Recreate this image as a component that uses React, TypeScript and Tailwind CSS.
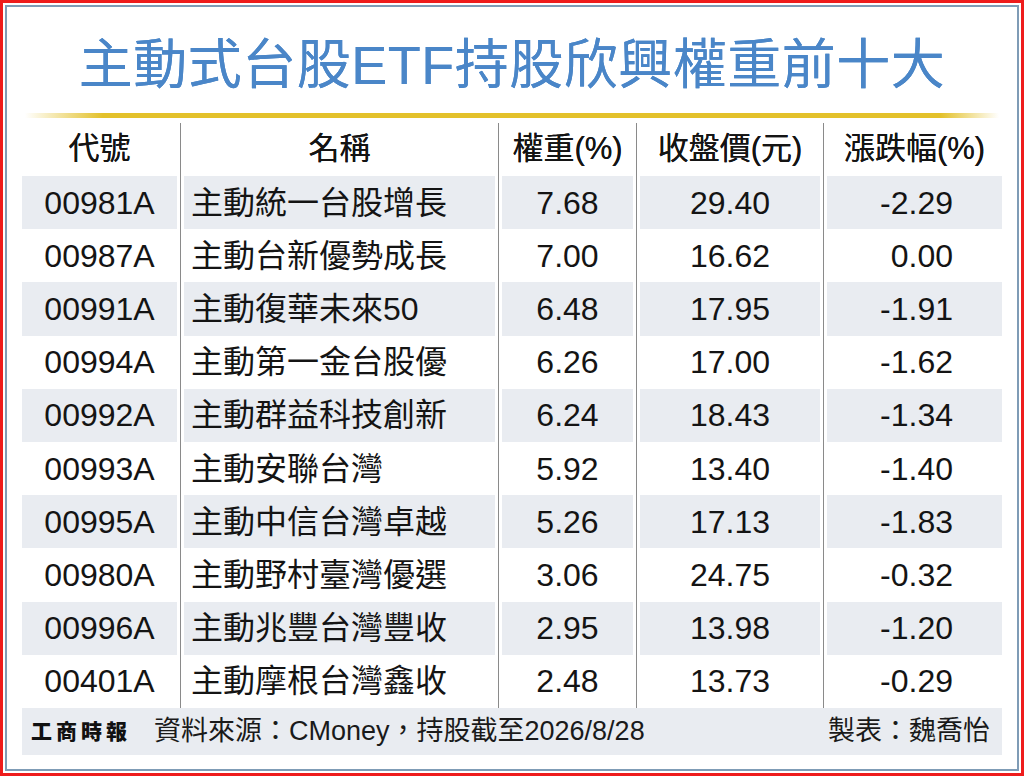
import React from "react";

const rows: [string, string, string, string, string][] = [
  ["00981A", "主動統一台股增長", "7.68", "29.40", "-2.29"],
  ["00987A", "主動台新優勢成長", "7.00", "16.62", "0.00"],
  ["00991A", "主動復華未來50", "6.48", "17.95", "-1.91"],
  ["00994A", "主動第一金台股優", "6.26", "17.00", "-1.62"],
  ["00992A", "主動群益科技創新", "6.24", "18.43", "-1.34"],
  ["00993A", "主動安聯台灣", "5.92", "13.40", "-1.40"],
  ["00995A", "主動中信台灣卓越", "5.26", "17.13", "-1.83"],
  ["00980A", "主動野村臺灣優選", "3.06", "24.75", "-0.32"],
  ["00996A", "主動兆豐台灣豐收", "2.95", "13.98", "-1.20"],
  ["00401A", "主動摩根台灣鑫收", "2.48", "13.73", "-0.29"],
];

function Sep({ top = false }: { top?: boolean }) {
  return (
    <div className={`w-[7px] shrink-0 self-stretch bg-white flex justify-center ${top ? "pt-[3px]" : ""}`}>
      <div className="w-px h-full bg-[#8a8a8a]" />
    </div>
  );
}

export default function App() {
  return (
    <div
      className="w-[1024px] h-[776px] border-[3px] border-[#ee1c1c] bg-white p-[2px] box-border"
      style={{ fontFamily: '"Liberation Sans", "Noto Sans CJK TC", sans-serif' }}
    >
      <div className="w-full h-full border-2 border-[#7f9cb6] box-border flex flex-col">
        {/* Title */}
        <div className="h-[106px] pt-[10px] flex items-center justify-center shrink-0">
          <h1 className="text-[54px] leading-none font-normal tracking-[0.5px] text-[#4a86c8] whitespace-nowrap [text-shadow:0_0_0.6px_#4a86c8]">
            主動式台股ETF持股欣興權重前十大
          </h1>
        </div>
        {/* Gold line */}
        <div className="mx-[18px] h-[5px] shrink-0 bg-[linear-gradient(to_right,rgba(227,193,43,0)_0%,#e3c12b_8%,#e3c12b_94%,rgba(227,193,43,0)_100%)]" />
        <div className="h-[2px] shrink-0" />
        {/* Table */}
        <div className="mx-[15px] w-[980px] text-[#141414]">
          {/* Header */}
          <div className="flex h-[56px] text-[31px] leading-none [text-shadow:0_0_0.4px_#141414]">
            <div className="w-[155px] flex items-center justify-center">代號</div>
            <Sep top />
            <div className="w-[311px] flex items-center justify-center">名稱</div>
            <Sep top />
            <div className="w-[131px] flex items-center justify-center">權重(%)</div>
            <Sep top />
            <div className="w-[180px] flex items-center justify-center">收盤價(元)</div>
            <Sep top />
            <div className="w-[175px] flex items-center justify-center">漲跌幅(%)</div>
          </div>
          {rows.map((r, i) => {
            const bg = i % 2 === 0 ? "bg-[#e9ecf1]" : "bg-white";
            return (
              <div key={r[0]} className="flex h-[53.2px] text-[32px] leading-none">
                <div className={`w-[155px] flex items-center justify-center ${bg}`}>{r[0]}</div>
                <Sep />
                <div className={`w-[311px] flex items-center pl-[7px] ${bg}`}>{r[1]}</div>
                <Sep />
                <div className={`w-[131px] flex items-center justify-center ${bg}`}>{r[2]}</div>
                <Sep />
                <div className={`w-[180px] flex items-center justify-center ${bg}`}>{r[3]}</div>
                <Sep />
                <div className={`w-[175px] flex items-center justify-end pr-[49px] ${bg}`}>{r[4]}</div>
              </div>
            );
          })}
          {/* Footer */}
          <div className="flex items-center h-[47px] bg-[#e9ecf1] pl-[9px] pr-[12px] text-[27px] leading-none text-[#1a1a1a]">
            <span className="text-[21px] font-black tracking-[4px] text-[#111]">工商時報</span>
            <span className="ml-[23px]">資料來源：CMoney，持股截至2026/8/28</span>
            <span className="ml-auto">製表：魏喬怡</span>
          </div>
        </div>
      </div>
    </div>
  );
}
